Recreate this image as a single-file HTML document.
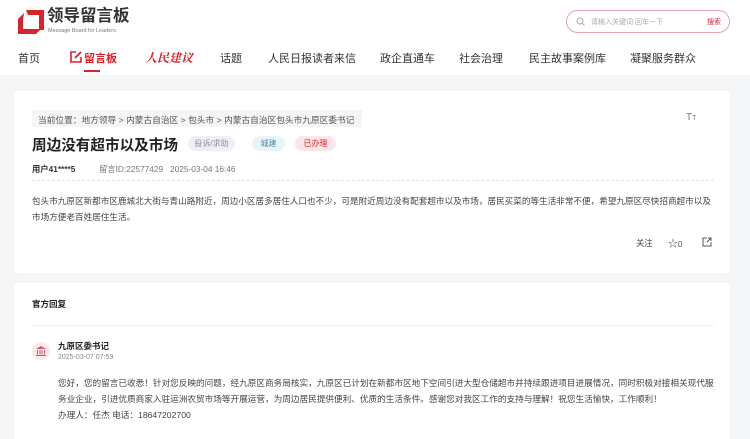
<!DOCTYPE html>
<html><head><meta charset="utf-8"><style>
*{margin:0;padding:0;box-sizing:border-box}
html,body{width:750px;height:439px;overflow:hidden}
body{background:#f5f6f8;font-family:"Liberation Sans","Noto Sans CJK SC",sans-serif;color:#333;position:relative}
.a{position:absolute;white-space:nowrap}
.top{position:absolute;left:0;top:0;width:750px;height:75px;background:#fff}
.nav{font-size:11px;color:#333;top:50px}
.card{position:absolute;background:#fff;left:14px;width:716px;border-radius:4px}
.tag{position:absolute;top:136px;height:15px;border-radius:8px;font-size:8px;line-height:15px;text-align:center}
.t{font-size:8.6px;color:#444}
.r{font-size:8.65px;color:#444}
</style></head><body>
<div class="top"></div>
<svg class="a" style="left:18px;top:10px" width="26" height="24" viewBox="0 0 26 24"><path d="M8 0H26V20H21V5H10Z" fill="#d8232a"/><path d="M6 3L0 9V24H18L23 19H5V10Z" fill="#d8232a"/></svg>
<div class="a" style="left:47px;top:6px;font-size:16.5px;font-weight:bold;color:#333;line-height:20px">领导留言板</div>
<div class="a" style="left:48px;top:28px;font-size:5.5px;color:#777;line-height:6px">Message Board for Leaders</div>
<div class="a" style="left:566px;top:10px;width:164px;height:23px;border:1px solid #e8a4ad;border-radius:12px"></div>
<svg class="a" style="left:576px;top:17px" width="9" height="9" viewBox="0 0 9 9"><circle cx="4" cy="4" r="3" fill="none" stroke="#aaa" stroke-width="1"/><path d="M6.2 6.2L8.5 8.5" stroke="#aaa"/></svg>
<div class="a" style="left:591px;top:17px;font-size:7px;color:#aaa">请输入关键词 回车一下</div>
<div class="a" style="left:707px;top:17px;font-size:7px;color:#c0283a">搜索</div>

<div class="a nav" style="left:18px">首页</div>
<svg class="a" style="left:70px;top:51px" width="12" height="12" viewBox="0 0 12 12"><path d="M6 1H1V11H11V6" fill="none" stroke="#d8232a" stroke-width="1.6"/><path d="M5 7L11 1" stroke="#d8232a" stroke-width="1.8"/></svg>
<div class="a nav" style="left:84px;color:#d8232a;font-weight:bold">留言板</div>
<div class="a" style="left:84px;top:70px;width:16px;height:2px;background:#d8232a"></div>
<div class="a nav" style="left:145px;color:#d8232a;font-weight:bold;font-style:italic;font-family:'Noto Serif CJK SC',serif;font-size:12px;top:49px">人民建议</div>
<div class="a nav" style="left:220px">话题</div>
<div class="a nav" style="left:268px">人民日报读者来信</div>
<div class="a nav" style="left:380px">政企直通车</div>
<div class="a nav" style="left:459px">社会治理</div>
<div class="a nav" style="left:529px">民主故事案例库</div>
<div class="a nav" style="left:630px">凝聚服务群众</div>

<div class="card" style="top:91px;height:182px"></div>
<div class="a" style="left:32px;top:110px;width:330px;height:17px;background:#f5f5f5"></div>
<div class="a" style="left:38px;top:113px;font-size:8.7px;color:#555">当前位置：地方领导 &gt; 内蒙古自治区 &gt; 包头市 &gt; 内蒙古自治区包头市九原区委书记</div>
<div class="a" style="left:686px;top:112px;font-size:10px;color:#777">T<span style="font-size:7px">T</span></div>
<div class="a" style="left:32px;top:134px;font-size:14.6px;font-weight:bold;color:#222">周边没有超市以及市场</div>
<div class="tag" style="left:188px;width:47px;background:#eef0f5;color:#8890a8">投诉/求助</div>
<div class="tag" style="left:252px;width:33px;background:#e8f4f6;color:#4a8aa8">城建</div>
<div class="tag" style="left:295px;width:41px;background:#fbe6e8;color:#d8232a">已办理</div>
<div class="a" style="left:32px;top:163px;font-size:8.3px;color:#333;font-weight:bold">用户41****5</div>
<div class="a" style="left:99px;top:163px;font-size:8.3px;color:#777">留言ID:22577429&nbsp;&nbsp;&nbsp;2025-03-04 16:46</div>
<div class="a" style="left:32px;top:180px;width:682px;border-top:1px dashed #e3e3e3"></div>
<div class="a t" style="left:32px;top:195px">包头市九原区新都市区鹿城北大街与青山路附近，周边小区居多居住人口也不少，可是附近周边没有配套超市以及市场，居民买菜的等生活非常不便，希望九原区尽快招商超市以及</div>
<div class="a t" style="left:32px;top:211px">市场方便老百姓居住生活。</div>
<div class="a" style="left:636px;top:237px;font-size:8.3px;color:#444">关注</div>
<div class="a" style="left:668px;top:235px;font-size:10px;color:#555">☆<span style="font-size:8px">0</span></div>
<svg class="a" style="left:702px;top:237px" width="10" height="10" viewBox="0 0 10 10"><path d="M5 1H1V9H9V5" fill="none" stroke="#555"/><path d="M5 5L9 1M6 1H9V4" fill="none" stroke="#555"/></svg>

<div class="card" style="top:283px;height:160px"></div>
<div class="a" style="left:32px;top:298px;font-size:8.5px;font-weight:bold;color:#222">官方回复</div>
<div class="a" style="left:32px;top:325px;width:682px;border-top:1px solid #eee"></div>
<div class="a" style="left:32px;top:342px;width:18px;height:18px;border-radius:50%;background:#fbe8ea"></div>
<svg class="a" style="left:35px;top:345px" width="12" height="12" viewBox="0 0 12 12"><path d="M1 4L6 1L11 4Z" fill="#d05a66"/><path d="M2.5 5V9.5M5 5V9.5M7 5V9.5M9.5 5V9.5M1 10.5H11" stroke="#d05a66" stroke-width="1"/></svg>
<div class="a" style="left:58px;top:340px;font-size:8.5px;font-weight:bold;color:#222">九原区委书记</div>
<div class="a" style="left:58px;top:354px;font-size:7px;color:#888">2025-03-07 07:59</div>
<div class="a r" style="left:58px;top:377px">您好，您的留言已收悉！针对您反映的问题，经九原区商务局核实，九原区已计划在新都市区地下空间引进大型仓储超市并持续跟进项目进展情况，同时积极对接相关现代服</div>
<div class="a r" style="left:58px;top:393px">务业企业，引进优质商家入驻运洲农贸市场等开展运营，为周边居民提供便利、优质的生活条件。感谢您对我区工作的支持与理解！祝您生活愉快，工作顺利！</div>
<div class="a r" style="left:58px;top:409px">办理人：任杰 电话：18647202700</div>
</body></html>
